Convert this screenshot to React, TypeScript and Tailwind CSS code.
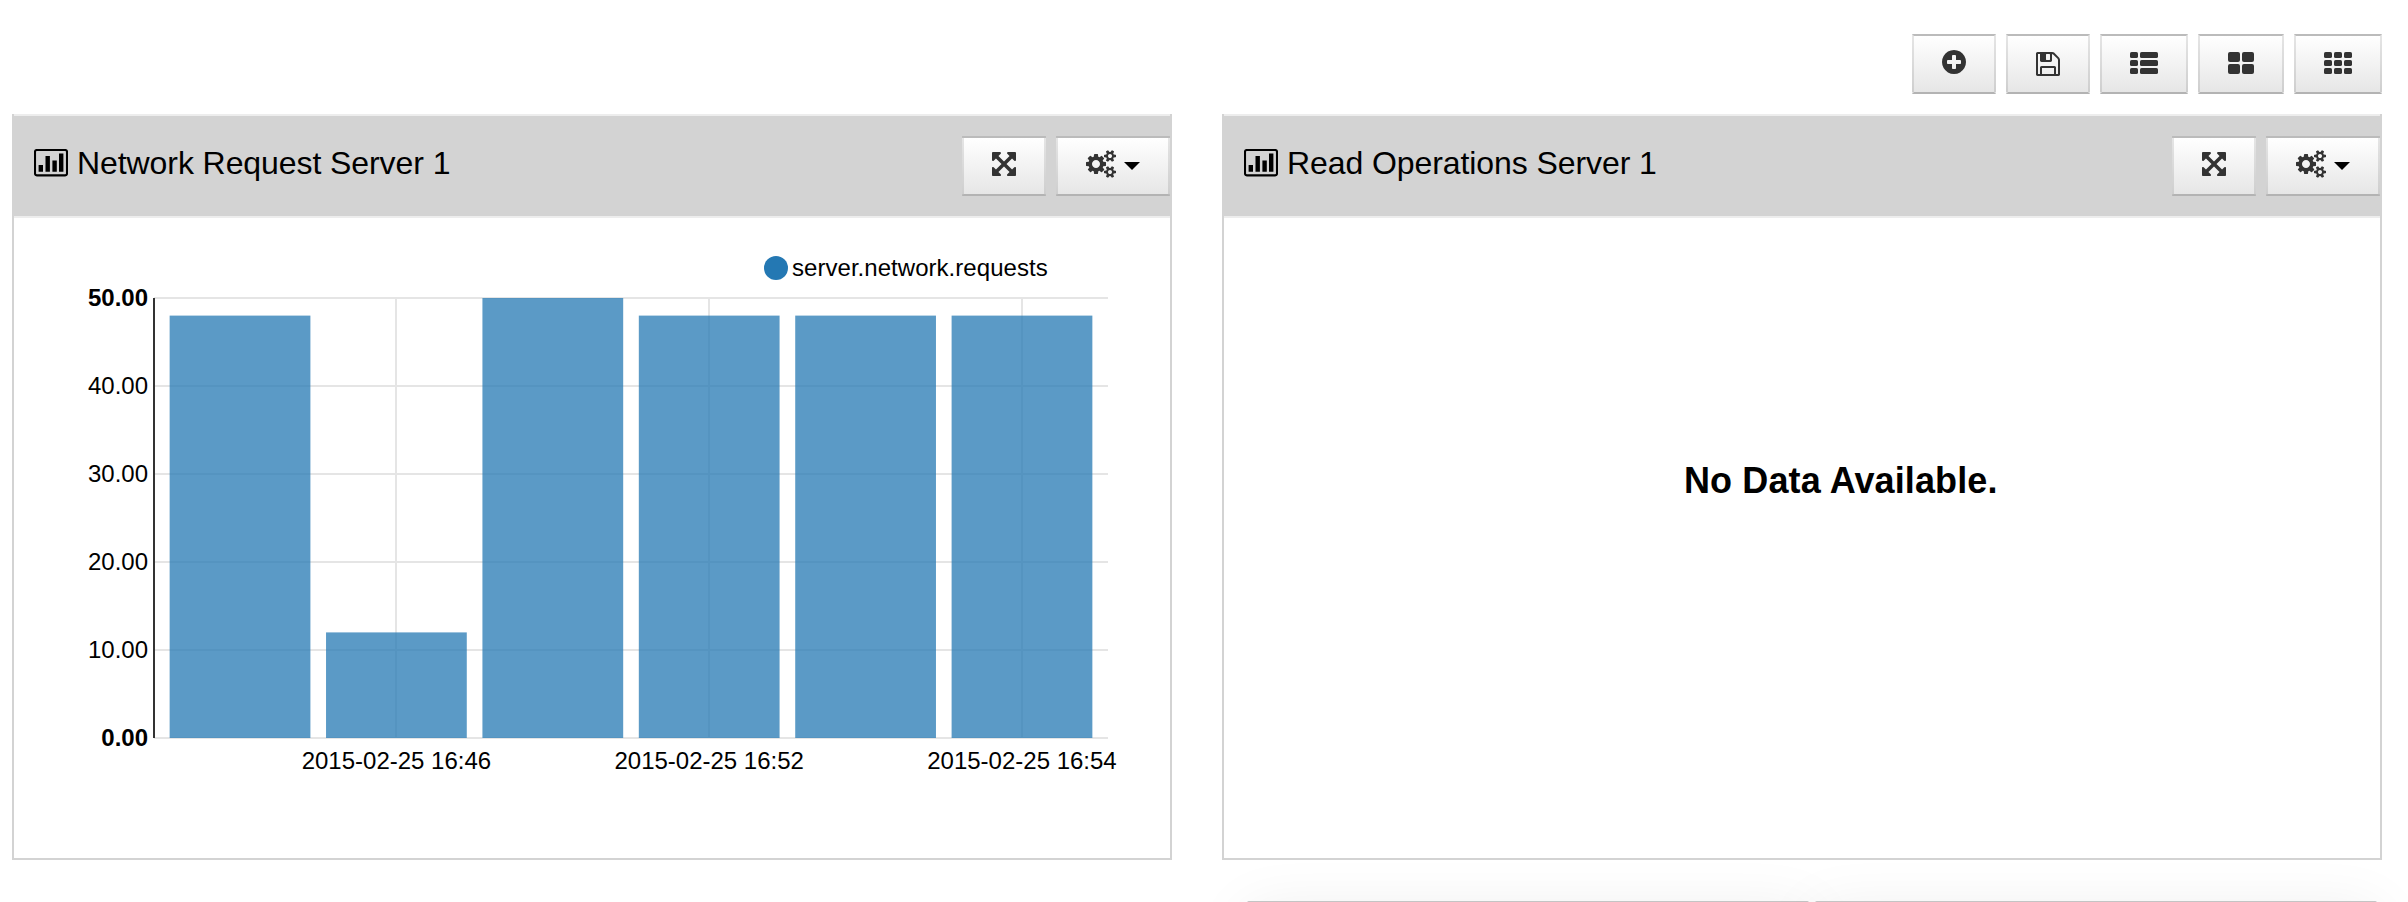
import React from "react";

const FLOPPY =
  "M512 1536h768v-384h-768v384zm896 0h128v-896q0-14-10-38.5t-20-34.5l-281-281q-10-10-34-20t-39-10v416q0 40-28 68t-68 28h-576q-40 0-68-28t-28-68v-416h-128v1280h128v-416q0-40 28-68t68-28h832q40 0 68 28t28 68v416zm-384-928v-320q0-13-9.5-22.5t-22.5-9.5h-192q-13 0-22.5 9.5t-9.5 22.5v320q0 13 9.5 22.5t22.5 9.5h192q13 0 22.5-9.5t9.5-22.5zm640 32v928q0 40-28 68t-68 28h-1344q-40 0-68-28t-28-68v-1344q0-40 28-68t68-28h928q40 0 88 20t76 48l280 280q28 28 48 76t20 88z";
const PLUS =
  "M1344 960v-128q0-26-19-45t-45-19h-256v-256q0-26-19-45t-45-19h-128q-26 0-45 19t-19 45v256h-256q-26 0-45 19t-19 45v128q0 26 19 45t45 19h256v256q0 26 19 45t45 19h128q26 0 45-19t19-45v-256h256q26 0 45-19t19-45zm320-64q0 209-103 385.5t-279.5 279.5-385.5 103-385.5-103-279.5-279.5-103-385.5 103-385.5 279.5-279.5 385.5-103 385.5 103 279.5 279.5 103 385.5z";
const ARROWS =
  "M1411 541l-355 355 355 355 144-144q29-31 70-14 39 17 39 59v448q0 26-19 45t-45 19h-448q-42 0-59-40-17-39 14-69l144-144-355-355-355 355 144 144q31 30 14 69-17 40-59 40h-448q-26 0-45-19t-19-45v-448q0-42 40-59 39-17 69 14l144 144 355-355-355-355-144 144q-19 19-45 19-12 0-24-5-40-17-40-59v-448q0-26 19-45t45-19h448q42 0 59 40 17 39-14 69l-144 144 355 355 355-355-144-144q-31-30-14-69 17-40 59-40h448q26 0 45 19t19 45v448q0 42-39 59-13 5-25 5-26 0-45-19z";
const COGS =
  "M832 896q0-106-75-181t-181-75-181 75-75 181 75 181 181 75 181-75 75-181zm768 512q0-52-38-90t-90-38-90 38-38 90q0 53 37.5 90.5t90.5 37.5 90.5-37.5 37.5-90.5zm0-1024q0-52-38-90t-90-38-90 38-38 90q0 53 37.5 90.5t90.5 37.5 90.5-37.5 37.5-90.5zm-384 421v185q0 10-7 19.5t-16 10.5l-155 24q-11 35-32 76 34 48 90 115 7 11 7 20 0 12-7 19-23 30-82.5 89.5t-78.5 59.5q-11 0-21-7l-115-90q-37 19-77 31-11 108-23 155-7 24-30 24h-186q-11 0-20-7.5t-10-17.5l-23-153q-34-10-75-31l-118 89q-7 7-20 7-11 0-21-8-144-133-144-160 0-9 7-19 10-14 41-53t47-61q-23-44-35-82l-152-24q-10-1-17-9.5t-7-19.5v-185q0-10 7-19.5t16-10.5l155-24q11-35 32-76-34-48-90-115-7-11-7-20 0-12 7-20 22-30 82-89t79-59q11 0 21 7l115 90q34-18 77-32 11-108 23-154 7-24 30-24h186q11 0 20 7.5t10 17.5l23 153q34 10 75 31l118-89q8-7 20-7 11 0 21 8 144 133 144 160 0 8-7 19-12 16-42 54t-45 60q23 48 34 82l152 23q10 2 17 10.5t7 19.5zm640 533v140q0 16-149 31-12 27-30 52 51 113 51 138 0 4-4 7-122 71-124 71-8 0-46-47t-52-68q-20 2-30 2t-30-2q-14 21-52 68t-46 47q-2 0-124-71-4-3-4-7 0-25 51-138-18-25-30-52-149-15-149-31v-140q0-16 149-31 13-29 30-52-51-113-51-138 0-4 4-7 4-2 35-20t59-34 30-16q8 0 46 46.5t52 67.5q20-2 30-2t30 2q51-71 92-112l6-2q4 0 124 70 4 3 4 7 0 25-51 138 17 23 30 52 149 15 149 31zm0-1024v140q0 16-149 31-12 27-30 52 51 113 51 138 0 4-4 7-122 71-124 71-8 0-46-47t-52-68q-20 2-30 2t-30-2q-14 21-52 68t-46 47q-2 0-124-71-4-3-4-7 0-25 51-138-18-25-30-52-149-15-149-31v-140q0-16 149-31 13-29 30-52-51-113-51-138 0-4 4-7 4-2 35-20t59-34 30-16q8 0 46 46.5t52 67.5q20-2 30-2t30 2q51-71 92-112l6-2q4 0 124 70 4 3 4 7 0 25-51 138 17 23 30 52 149 15 149 31z";

/** Icon built from rounded cells laid out in rows. */
function Cells({ columns, rows, height }: { columns: number[]; rows: number; height: number }) {
  const gap = 2;
  const width = columns.reduce((a, b) => a + b, 0) + gap * (columns.length - 1);
  const cells: React.ReactNode[] = [];
  for (let r = 0; r < rows; r++) {
    let x = 0;
    columns.forEach((w, c) => {
      cells.push(
        <rect key={`${r}-${c}`} x={x} y={r * (height + gap)} width={w} height={height} rx={height > 8 ? 2 : 1.6} />
      );
      x += w + gap;
    });
  }
  return (
    <svg width={width} height={22} viewBox={`0 0 ${width} 22`} fill="#333" className="mt-4">
      {cells}
    </svg>
  );
}

function Button({ children, label }: { children: React.ReactNode; label: string }) {
  return (
    <button
      aria-label={label}
      className="flex h-[60px] shrink-0 items-start border-2 border-x-black/10 border-t-[#bbb] border-b-[#b3b3b3] bg-linear-to-b from-white to-[#e6e6e6] px-7"
    >
      {children}
    </button>
  );
}

function BarChartIcon() {
  return (
    <svg width="34" height="28" viewBox="0 0 34 28" className="mt-[33px] shrink-0">
      <rect x="1" y="1" width="32" height="25.4" rx="1.8" fill="none" stroke="#000" strokeWidth="2.1" />
      <path d="M4.6 16H9v6.8H4.6zM11.5 6.9h4.4v15.9h-4.4zM18.4 11.4h4.4v11.4h-4.4zM25 4.6h4.4v18.2H25z" />
    </svg>
  );
}

function Panel({ title, children }: { title: string; children: React.ReactNode }) {
  return (
    <section className="flex h-[746px] w-[1160px] flex-col border-x-2 border-b-2 border-[#d3d3d3]">
      <header className="flex h-[104px] items-start border-y-2 border-[#ededed] bg-[#d3d3d3] pl-5">
        <BarChartIcon />
        <h2 className="mt-[29px] ml-[9px] flex-1 text-[32px] leading-9 tracking-[-0.08px] text-black">{title}</h2>
        <div className="mt-5 flex gap-2.5">
          <Button label="Expand">
            <svg width="24" height="24" viewBox="128 128 1536 1536" fill="#333" className="mt-3.5">
              <path d={ARROWS} />
            </svg>
          </Button>
          <Button label="Settings">
            <svg width="30" height="28" viewBox="-64 0 1920 1792" fill="#333" className="mt-3">
              <path d={COGS} />
            </svg>
            <svg width="16" height="8" viewBox="0 0 16 8" className="mt-6 ml-2">
              <path d="M0 0h16L8 8z" />
            </svg>
          </Button>
        </div>
      </header>
      {children}
    </section>
  );
}

const VALUES = [48, 12, 50, 48, 48, 48];
const TICKS: [number, string][] = [
  [1, "2015-02-25 16:46"],
  [3, "2015-02-25 16:52"],
  [5, "2015-02-25 16:54"],
];
const LEFT = 140;
const WIDTH = 954;
const TOP = 80;
const BOTTOM = 520;
const STEP = WIDTH / 6.1;
const barX = (i: number) => LEFT + STEP * (i + 0.1);
const valueY = (v: number) => BOTTOM - v * 8.8;

function Chart() {
  return (
    <svg width="1156" height="640" viewBox="0 0 1156 640" className="block text-2xl" fill="#000">
      {[0, 10, 20, 30, 40, 50].map((v) => (
        <g key={v}>
          <path d={`M${LEFT} ${valueY(v)}h${WIDTH}`} stroke="#e5e5e5" strokeWidth="2" />
          <text x={LEFT - 6} y={valueY(v) + 8} textAnchor="end" fontWeight={v % 50 === 0 ? 700 : 400}>
            {v.toFixed(2)}
          </text>
        </g>
      ))}
      {TICKS.map(([i, label]) => {
        const x = barX(i) + STEP * 0.45;
        return (
          <g key={label}>
            <path d={`M${Math.round(x)} ${TOP}V${BOTTOM}`} stroke="#e5e5e5" strokeWidth="2" />
            <text x={x} y={BOTTOM + 31} textAnchor="middle">
              {label}
            </text>
          </g>
        );
      })}
      {VALUES.map((v, i) => (
        <rect
          key={i}
          x={barX(i)}
          y={valueY(v)}
          width={STEP * 0.9}
          height={BOTTOM - valueY(v)}
          fill="#2478b3"
          fillOpacity="0.75"
        />
      ))}
      <path d={`M${LEFT} ${TOP}V${BOTTOM}`} stroke="#333" strokeWidth="2" />
      <circle cx="762" cy="50" r="12" fill="#2478b3" />
      <text x="778" y="58" letterSpacing="0.04">
        server.network.requests
      </text>
    </svg>
  );
}

export default function App() {
  return (
    <div className="relative flex h-[902px] w-[2408px] flex-col overflow-hidden bg-white font-['Liberation_Sans',Arial,sans-serif]">
      <div className="flex justify-end gap-2.5 pt-[34px] pr-[26px] pb-5">
        <Button label="Add">
          <svg width="24" height="24" viewBox="128 128 1536 1536" fill="#333" className="mt-3.5">
            <path d={PLUS} />
          </svg>
        </Button>
        <Button label="Save">
          <svg width="24" height="24" viewBox="128 128 1536 1536" fill="#333" className="mt-4">
            <path d={FLOPPY} />
          </svg>
        </Button>
        <Button label="One column">
          <Cells columns={[8, 18]} rows={3} height={6} />
        </Button>
        <Button label="Two columns">
          <Cells columns={[12, 12]} rows={2} height={10} />
        </Button>
        <Button label="Three columns">
          <Cells columns={[8, 8, 8]} rows={3} height={6} />
        </Button>
      </div>
      <main className="flex gap-[50px] pl-3">
        <Panel title="Network Request Server 1">
          <Chart />
        </Panel>
        <Panel title="Read Operations Server 1">
          <div className="pt-[242px] pl-[460px] text-4xl leading-[42px] font-bold tracking-[0.12px] text-black">
            No Data Available.
          </div>
        </Panel>
      </main>
      <div className="absolute top-[901px] left-[1247px] flex gap-1.5">
        <div className="h-20 w-[562px] rounded-xs border-2 border-[#c4c4c4] bg-white shadow-[0_10px_60px_rgba(0,0,0,0.08)]" />
        <div className="h-20 w-[562px] rounded-xs border-2 border-[#c4c4c4] bg-white shadow-[0_10px_60px_rgba(0,0,0,0.08)]" />
      </div>
    </div>
  );
}
